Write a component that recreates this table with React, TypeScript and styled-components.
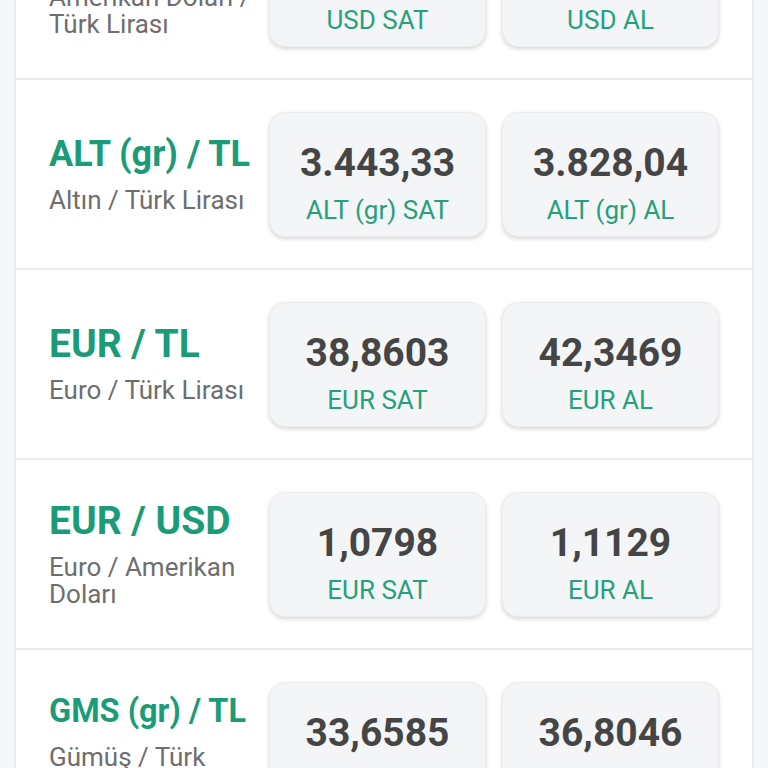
import React from "react";
import styled, { createGlobalStyle } from "styled-components";

const GlobalStyle = createGlobalStyle`
  html, body {
    margin: 0;
    padding: 0;
    background: #f3f7f7;
    font-family: Roboto, "Noto Sans", "Liberation Sans", sans-serif;
    overflow: hidden;
  }
`;

const Page = styled.div`
  height: 768px;
  overflow: hidden;
`;

const Panel = styled.div`
  margin: -110px 16px 0;
  background: #ffffff;
  box-shadow: 0 0 3px rgba(0, 0, 0, 0.14);
`;

const Row = styled.div`
  display: grid;
  grid-template-columns: 204px 217px 217px;
  column-gap: 16px;
  align-items: center;
  height: 188px;
  padding: 0 33px;
  border-bottom: 2px solid #ebebeb;
`;

const Names = styled.div`
  display: flex;
  flex-direction: column;
`;

const Title = styled.div<{ $size: number }>`
  font-size: ${(p) => p.$size}px;
  line-height: 40px;
  font-weight: 700;
  color: #1b9b77;
  white-space: nowrap;
`;

const Subtitle = styled.div`
  margin-top: 13px;
  font-size: 26px;
  line-height: 27px;
  color: #6e6e6e;
`;

const Card = styled.div`
  height: 125px;
  box-sizing: border-box;
  padding-top: 28px;
  border-radius: 16px;
  background: #f4f5f7;
  border: 1px solid #ececef;
  box-shadow: 0 2px 4px rgba(0, 0, 0, 0.16);
  display: flex;
  flex-direction: column;
  align-items: center;
`;

const Value = styled.div`
  font-size: 39px;
  line-height: 44px;
  font-weight: 700;
  color: #454545;
`;

const Label = styled.div`
  margin-top: 10px;
  font-size: 26px;
  line-height: 30px;
  color: #26a07c;
`;

type Rate = {
  code: string;
  size: number;
  name: string;
  short: string;
  sell: string;
  buy: string;
};

const rates: Rate[] = [
  { code: "USD / TL", size: 39, name: "Amerikan Doları / Türk Lirası", short: "USD", sell: "36,0021", buy: "39,2114" },
  { code: "ALT (gr) / TL", size: 36, name: "Altın / Türk Lirası", short: "ALT (gr)", sell: "3.443,33", buy: "3.828,04" },
  { code: "EUR / TL", size: 39, name: "Euro / Türk Lirası", short: "EUR", sell: "38,8603", buy: "42,3469" },
  { code: "EUR / USD", size: 39, name: "Euro / Amerikan Doları", short: "EUR", sell: "1,0798", buy: "1,1129" },
  { code: "GMS (gr) / TL", size: 32.5, name: "Gümüş / Türk Lirası", short: "GMS (gr)", sell: "33,6585", buy: "36,8046" },
];

export default function App() {
  return (
    <Page>
      <GlobalStyle />
      <Panel>
        {rates.map((r) => (
          <Row key={r.code}>
            <Names>
              <Title $size={r.size}>{r.code}</Title>
              <Subtitle>{r.name}</Subtitle>
            </Names>
            <Card>
              <Value>{r.sell}</Value>
              <Label>{r.short} SAT</Label>
            </Card>
            <Card>
              <Value>{r.buy}</Value>
              <Label>{r.short} AL</Label>
            </Card>
          </Row>
        ))}
      </Panel>
    </Page>
  );
}
